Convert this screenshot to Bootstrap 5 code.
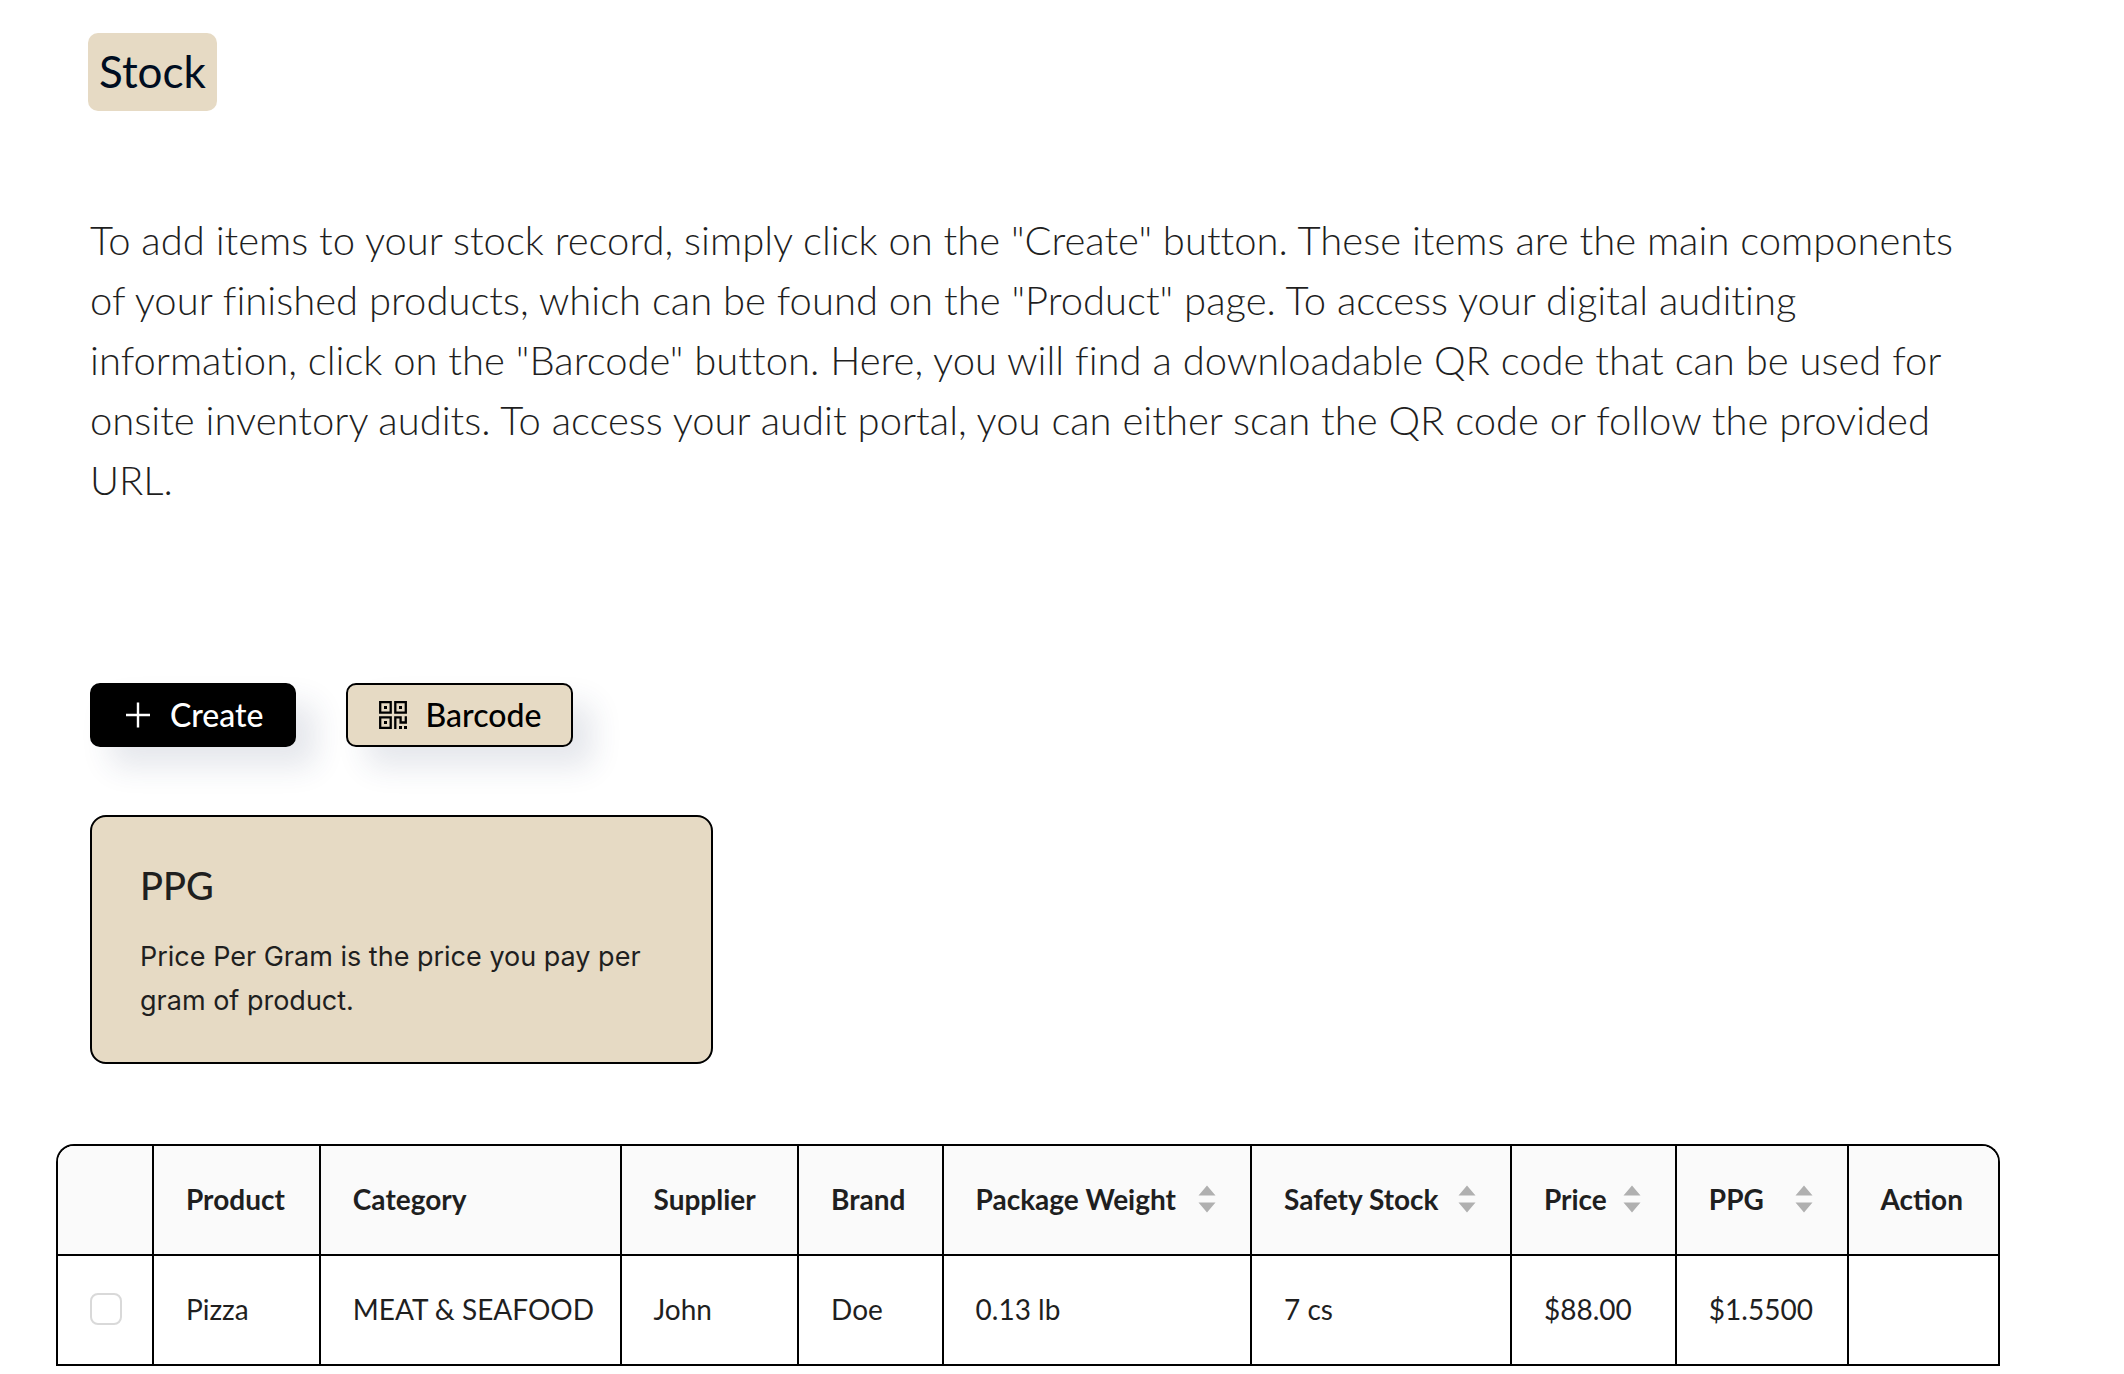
<!DOCTYPE html>
<html lang="en">
<head>
<meta charset="utf-8">
<meta name="viewport" content="width=device-width, initial-scale=1">
<title>Stock</title>
<link href="https://cdn.jsdelivr.net/npm/bootstrap@5.3.0/dist/css/bootstrap.min.css" rel="stylesheet">
<style>
  body { font-family: Lato, sans-serif; font-size: 28px; color: #1f1f1f; background: #fff; }
  .page-shell { padding: 33px 124px 8px 56px; }
  .page-intro { padding: 0 0 0 32px; }
  .sand { background: #e6dac4; }
  .page-title { font-size: 44px; line-height: 76px; font-weight: 400; color: #000d21; padding: 0 11px 2px; border-radius: 10px; margin: 0; }
  .intro-text { font-size: 40px; line-height: 60px; font-weight: 300; font-variant-ligatures: no-common-ligatures; margin: 99px 0 173px; padding: 0 16px 0 2px; }
  .actions { gap: 50px; margin-left: 2px; }
  .action-btn { --bs-btn-font-size: 32px; --bs-btn-font-weight: 500; --bs-btn-line-height: 60px; --bs-btn-padding-y: 0px; --bs-btn-padding-x: 30px; --bs-btn-border-width: 2px; --bs-btn-border-radius: 10px; --bs-btn-border-color: #000; --bs-btn-color: #000; gap: 18px; box-shadow: 20px 20px 30px rgba(39, 60, 102, .12); }
  .action-btn.create { --bs-btn-color: #fff; --bs-btn-bg: #000; --bs-btn-hover-color: #fff; --bs-btn-hover-bg: #222; }
  .action-btn.barcode { --bs-btn-bg: #e6dac4; --bs-btn-hover-bg: #dccdb0; }
  .action-btn svg { width: 30px; height: 30px; }
  .info-card { width: 623px; max-width: 100%; margin: 68px 0 80px 2px; border: 2px solid #000; border-radius: 16px; }
  .info-card .card-body { padding: 43px 48px 39px; }
  .info-card h2 { font-size: 38px; line-height: 50px; font-weight: 500; margin: 0 0 25px; }
  .info-card p { font-family: Inter, sans-serif; font-size: 27px; line-height: 44px; margin: 0; }
  .stock-table { --bs-table-color: #1f1f1f; border-collapse: separate; border-spacing: 0; border: 2px solid #000; border-bottom-width: 0; border-radius: 18px 18px 0 0; overflow: hidden; table-layout: fixed; margin: 0; }
  .stock-table th, .stock-table td { height: 110px; padding: 0 32px 2px; border: 0 solid #000; border-bottom-width: 2px; border-right-width: 2px; vertical-align: middle; white-space: nowrap; line-height: 44px; }
  .stock-table th:last-child, .stock-table td:last-child { border-right-width: 0; }
  .stock-table th { background: #fafafa; font-weight: 700; }
  .stock-table th.sortable { padding-right: 34px; }
  .sort-btn { border: 0; padding: 0; background: none; color: inherit; font-weight: inherit; }
  .sort-btn svg { width: 18px; height: 28px; fill: #b0b0b0; flex: none; }
  .row-check { width: 32px; height: 32px; margin: 0; border: 2px solid #d9d9d9; border-radius: 8px !important; display: block; }
</style>
<script src="https://cdn.jsdelivr.net/npm/bootstrap@5.3.0/dist/js/bootstrap.bundle.min.js"></script>
</head>
<body>
<main class="page-shell">
  <header class="page-intro">
    <h1 class="page-title sand d-inline-block align-top">Stock</h1>
    <p class="intro-text">To add items to your stock record, simply click on the "Create" button. These items are the main components of your finished products, which can be found on the "Product" page. To access your digital auditing information, click on the "Barcode" button. Here, you will find a downloadable QR code that can be used for onsite inventory audits. To access your audit portal, you can either scan the QR code or follow the provided URL.</p>
    <div class="actions d-flex flex-wrap">
      <button type="button" class="btn action-btn create d-inline-flex align-items-center">
        <svg viewBox="0 0 30 30" fill="none" stroke="currentColor" stroke-width="2.4" aria-hidden="true"><path d="M16 2.500v25M4 15h24"/></svg>
        Create
      </button>
      <button type="button" class="btn action-btn barcode d-inline-flex align-items-center">
        <svg viewBox="0 0 30 30" fill="none" stroke="currentColor" stroke-width="2.3" aria-hidden="true"><path d="M2.200 2.200h10.500v10.500H2.200zM17.300 2.200h10.500v10.500H17.300zM2.200 17.300h10.500v10.500H2.200zM17.300 29V17.300h5.300v5.200h5.200v-6.300"/><path fill="currentColor" stroke="none" d="M6 6h3v3H6zM21 6h3v3h-3zM6 21h3v3H6zM21 26h3v3h-3zM26 26h3v3h-3z"/></svg>
        Barcode
      </button>
    </div>
    <section class="card info-card sand">
      <div class="card-body">
        <h2>PPG</h2>
        <p>Price Per Gram is the price you pay per gram of product.</p>
      </div>
    </section>
  </header>
  <table class="table stock-table w-100">
    <colgroup>
      <col style="width:4.95%"><col style="width:8.6%"><col style="width:15.5%"><col style="width:9.15%"><col style="width:7.45%"><col style="width:15.9%"><col style="width:13.4%"><col style="width:8.5%"><col style="width:8.85%"><col style="width:7.7%">
    </colgroup>
    <thead>
      <tr>
        <th scope="col" aria-label="Select"></th>
        <th scope="col">Product</th>
        <th scope="col">Category</th>
        <th scope="col">Supplier</th>
        <th scope="col">Brand</th>
        <th scope="col" class="sortable"><button type="button" class="sort-btn d-flex w-100 align-items-center justify-content-between">Package Weight<svg viewBox="0 0 18 28" aria-hidden="true"><path d="M9 .5 17.500 10.500H.5zM.5 17.500h17L9 27.500z"/></svg></button></th>
        <th scope="col" class="sortable"><button type="button" class="sort-btn d-flex w-100 align-items-center justify-content-between">Safety Stock<svg viewBox="0 0 18 28" aria-hidden="true"><path d="M9 .5 17.500 10.500H.5zM.5 17.500h17L9 27.500z"/></svg></button></th>
        <th scope="col" class="sortable"><button type="button" class="sort-btn d-flex w-100 align-items-center justify-content-between">Price<svg viewBox="0 0 18 28" aria-hidden="true"><path d="M9 .5 17.500 10.500H.5zM.5 17.500h17L9 27.500z"/></svg></button></th>
        <th scope="col" class="sortable"><button type="button" class="sort-btn d-flex w-100 align-items-center justify-content-between">PPG<svg viewBox="0 0 18 28" aria-hidden="true"><path d="M9 .5 17.500 10.500H.5zM.5 17.500h17L9 27.500z"/></svg></button></th>
        <th scope="col">Action</th>
      </tr>
    </thead>
    <tbody>
      <tr>
        <td><input class="form-check-input row-check" type="checkbox" aria-label="Select Pizza"></td>
        <td>Pizza</td>
        <td>MEAT &amp; SEAFOOD</td>
        <td>John</td>
        <td>Doe</td>
        <td>0.13 lb</td>
        <td>7 cs</td>
        <td>$88.00</td>
        <td>$1.5500</td>
        <td></td>
      </tr>
    </tbody>
  </table>
</main>
</body>
</html>
